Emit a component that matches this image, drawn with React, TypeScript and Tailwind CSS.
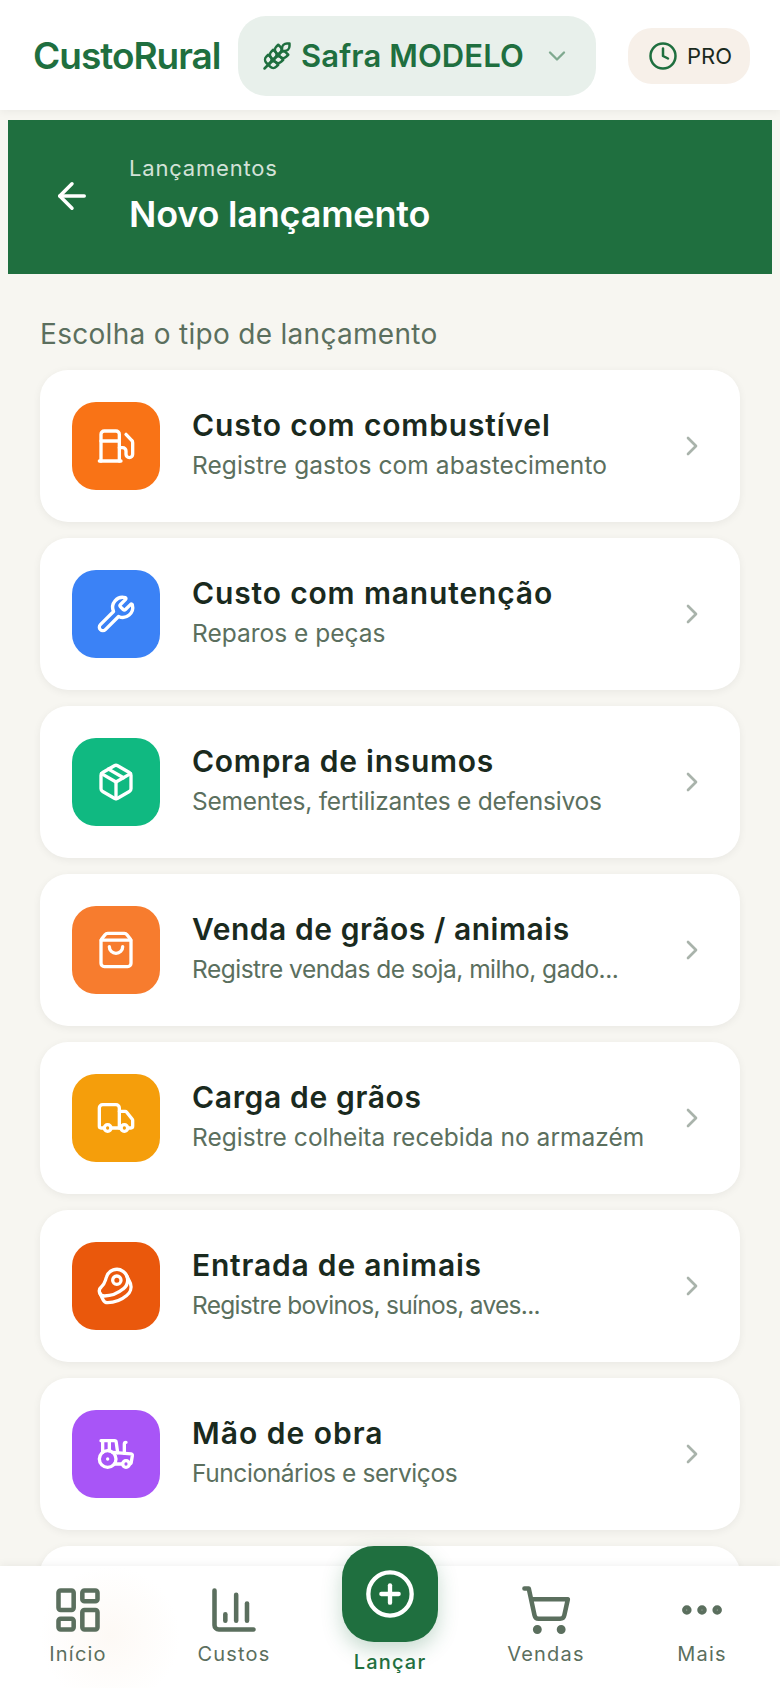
import { ArrowLeft, ChartColumn, ChevronDown, ChevronRight, CirclePlus, Clock, Ellipsis, Beef, Fuel, LayoutDashboard, Package, ShoppingBag, ShoppingCart, Tractor, Truck, Wheat, Wrench } from "lucide-react"

const items = [
  { title: "Custo com combustível", sub: "Registre gastos com abastecimento", icon: Fuel, color: "bg-[#f97316]", titleTrack: "tracking-[0.85px]", subTrack: "tracking-[0.06px]" },
  { title: "Custo com manutenção", sub: "Reparos e peças", icon: Wrench, color: "bg-[#3b82f6]", titleTrack: "tracking-[0.85px]", subTrack: "tracking-normal" },
  { title: "Compra de insumos", sub: "Sementes, fertilizantes e defensivos", icon: Package, color: "bg-[#10b981]", titleTrack: "tracking-[0.75px]", subTrack: "tracking-[-0.24px]" },
  { title: "Venda de grãos / animais", sub: "Registre vendas de soja, milho, gado...", icon: ShoppingBag, color: "bg-[#f77c2e]", titleTrack: "tracking-[0.55px]", subTrack: "tracking-[-0.5px]" },
  { title: "Carga de grãos", sub: "Registre colheita recebida no armazém", icon: Truck, color: "bg-[#f59e0b]", titleTrack: "tracking-[0.65px]", subTrack: "tracking-[0.03px]" },
  { title: "Entrada de animais", sub: "Registre bovinos, suínos, aves...", icon: Beef, color: "bg-[#ea580c]", titleTrack: "tracking-[0.8px]", subTrack: "tracking-[-0.7px]" },
  { title: "Mão de obra", sub: "Funcionários e serviços", icon: Tractor, color: "bg-[#a855f7]", titleTrack: "tracking-[1px]", subTrack: "tracking-[-0.42px]" },
]

function NavItem({ label, icon: Icon, stroke = 2.1 }: { label: string; icon: typeof Fuel; stroke?: number }) {
  return (
    <div className="flex w-[156px] flex-col items-center">
      <Icon size={52} strokeWidth={stroke} className="text-[#5b6f5e]" />
      <span className="mt-[4px] text-[20px] leading-[28px] tracking-[1.2px] text-[#5b6f5e]">{label}</span>
    </div>
  )
}

export default function App() {
  return (
    <div className="flex h-[1688px] w-[780px] flex-col overflow-hidden bg-[#f7f6f1] font-['Inter',sans-serif]">
      <header className="z-10 flex h-[110px] shrink-0 items-center bg-white pl-[33px] pt-[2px] shadow-[0_2px_8px_rgba(0,0,0,0.05)]">
        <span className="w-[205px] text-[37px] font-semibold tracking-[-1px] text-[#1f6f3f]">CustoRural</span>
        <div className="flex h-[80px] w-[358px] items-center rounded-[28px] bg-[#e8f0eb] pl-[24px]">
          <Wheat size={30} strokeWidth={2} className="text-[#1f6f3f]" />
          <span className="ml-[9px] w-[224px] text-[31px] font-semibold tracking-[0.1px] text-[#1f6f3f]">Safra MODELO</span>
          <ChevronDown size={28} strokeWidth={2} className="ml-[18px] text-[#7fa98f]" />
        </div>
        <div className="ml-[32px] flex h-[56px] w-[122px] items-center rounded-[24px] bg-[#f7f0e9] pl-[20px]">
          <Clock size={30} strokeWidth={2} className="text-[#1f6f3f]" />
          <span className="ml-[9px] text-[22px] text-[#1a2a1e]">PRO</span>
        </div>
      </header>

      <main className="flex min-h-0 flex-1 flex-col overflow-hidden px-[8px] pt-[10px]">
        <section className="flex h-[154px] shrink-0 items-center bg-[#1f6f3f] pb-[3px] pl-[43px]">
          <ArrowLeft size={42} strokeWidth={2} className="text-white" />
          <div className="ml-[36px]">
            <p className="text-[22px] leading-[30px] tracking-[0.8px] text-[#d3e2d8]">Lançamentos</p>
            <h1 className="mt-[6px] text-[36px] leading-[50px] font-semibold tracking-[-0.2px] text-white">Novo lançamento</h1>
          </div>
        </section>

        <div className="px-[32px] pt-[41px]">
          <p className="text-[28px] leading-[38px] tracking-[0.3px] text-[#5b6f5e]">Escolha o tipo de lançamento</p>
          <div className="mt-[17px] flex flex-col gap-[16px]">
            {items.map((item) => {
              const Icon = item.icon
              return (
                <div key={item.title} className="flex h-[152px] shrink-0 items-center rounded-[28px] bg-white px-[32px] shadow-[0_2px_8px_rgba(0,0,0,0.06)]">
                  <div className={`flex h-[88px] w-[88px] shrink-0 items-center justify-center rounded-[24px] ${item.color}`}>
                    <Icon size={40} strokeWidth={2} className="text-white" />
                  </div>
                  <div className="ml-[32px] min-w-0 flex-1">
                    <p className={`text-[30px] leading-[38px] font-semibold text-[#1a2a1e] ${item.titleTrack}`}>{item.title}</p>
                    <p className={`text-[24.5px] leading-[42px] text-[#5b6f5e] ${item.subTrack}`}>{item.sub}</p>
                  </div>
                  <ChevronRight size={32} strokeWidth={2} className="shrink-0 text-[#a9b3ab]" />
                </div>
              )
            })}
            <div className="h-[152px] shrink-0 rounded-[28px] bg-white shadow-[0_2px_8px_rgba(0,0,0,0.06)]" />
          </div>
        </div>
      </main>

      <nav className="z-10 flex h-[122px] shrink-0 items-start bg-white bg-[radial-gradient(circle_at_110px_70px,#fdf9f5_0,#ffffff_70px)] pt-[18px] shadow-[0_-2px_8px_rgba(0,0,0,0.05)]">
        <NavItem label="Início" icon={LayoutDashboard} />
        <NavItem label="Custos" icon={ChartColumn} />
        <div className="flex w-[156px] flex-col items-center">
          <div className="mt-[-38px] flex h-[96px] w-[96px] items-center justify-center rounded-[32px] bg-[#1f6f3f] shadow-[0_8px_20px_rgba(31,111,63,0.25)]">
            <CirclePlus size={52} strokeWidth={2} className="text-white" />
          </div>
          <span className="mt-[6px] text-[20px] leading-[28px] font-medium tracking-[1.2px] text-[#1f6f3f]">Lançar</span>
        </div>
        <NavItem label="Vendas" icon={ShoppingCart} />
        <NavItem label="Mais" icon={Ellipsis} stroke={2.4} />
      </nav>
    </div>
  )
}
